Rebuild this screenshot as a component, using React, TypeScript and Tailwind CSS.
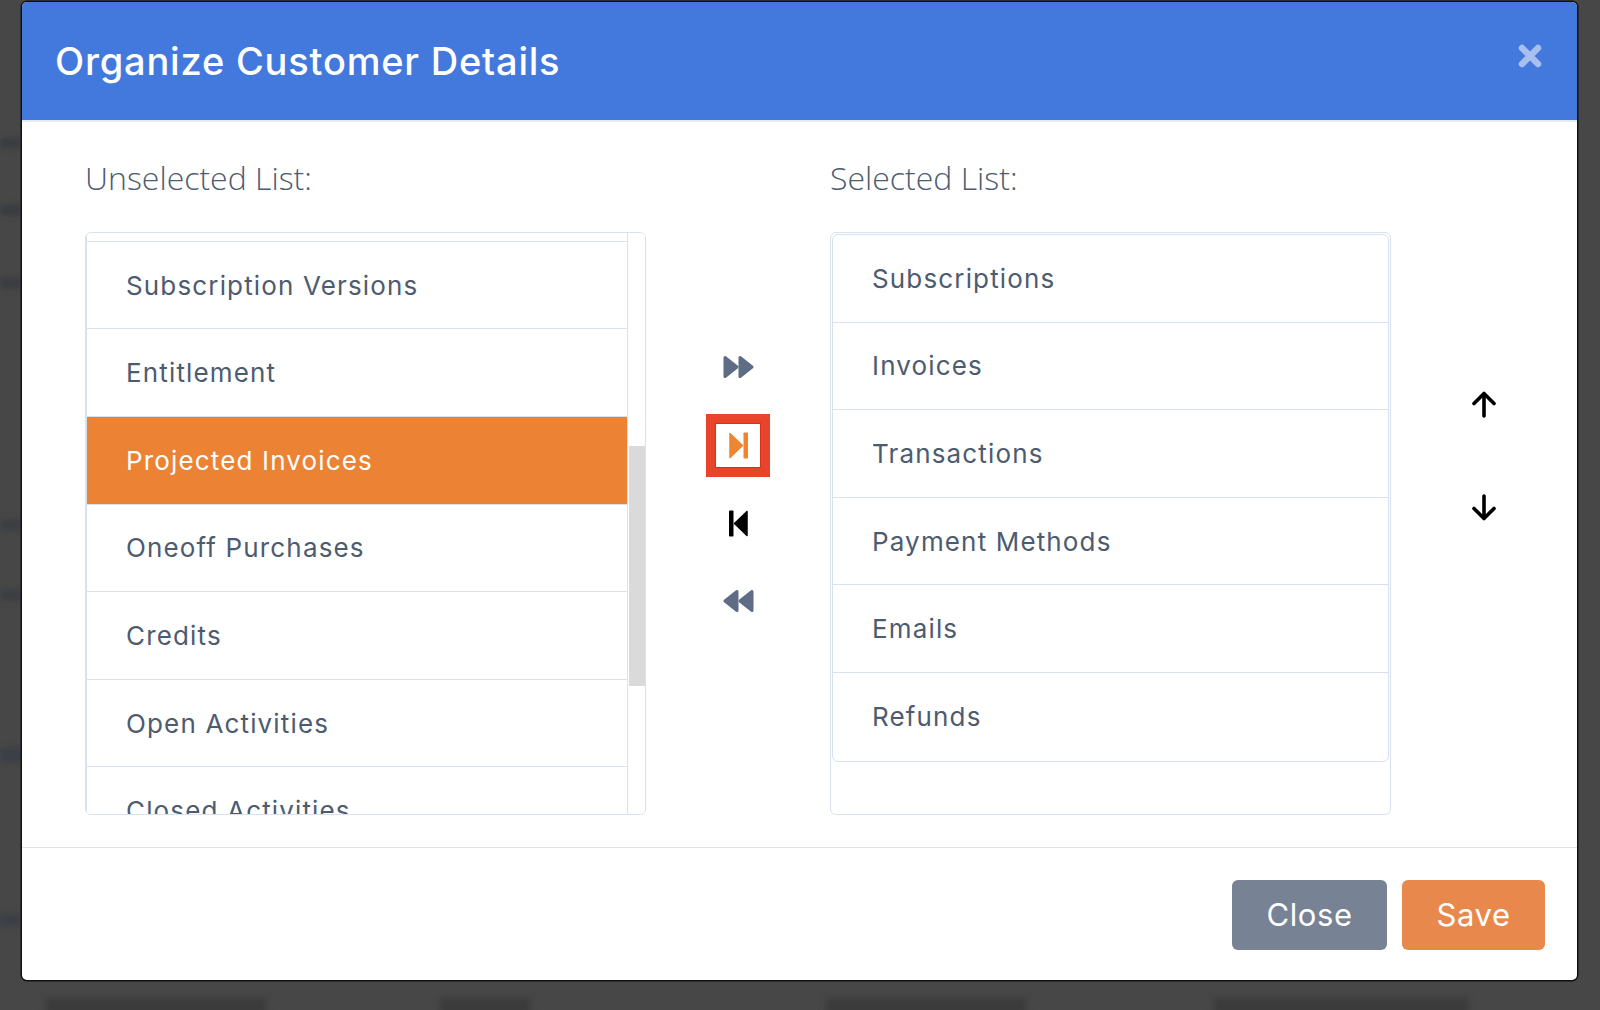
import React from "react";

const leftItems = [
  "Subscription Versions",
  "Entitlement",
  "Projected Invoices",
  "Oneoff Purchases",
  "Credits",
  "Open Activities",
  "Closed Activities",
];
const rightItems = ["Subscriptions", "Invoices", "Transactions", "Payment Methods", "Emails", "Refunds"];

function FastForward({ flip = false }: { flip?: boolean }) {
  return (
    <svg width="31" height="24" viewBox="0 0 31 24" style={flip ? { transform: "scaleX(-1)" } : undefined}>
      <path d="M2 2.5 L14 12 L2 21.5 Z" fill="#5e6d85" stroke="#5e6d85" strokeWidth="3" strokeLinejoin="round" />
      <path d="M17 2.5 L29 12 L17 21.5 Z" fill="#5e6d85" stroke="#5e6d85" strokeWidth="3" strokeLinejoin="round" />
    </svg>
  );
}

function StepForward({ color, flip = false }: { color: string; flip?: boolean }) {
  return (
    <svg width="19" height="27" viewBox="0 0 19 27" style={flip ? { transform: "scaleX(-1)" } : undefined}>
      <path d="M1 1.5 L13.5 13.5 L1 25.5 Z" fill={color} stroke={color} strokeWidth="1.5" strokeLinejoin="round" />
      <rect x="14.5" y="0.5" width="4.5" height="26" rx="0.8" fill={color} />
    </svg>
  );
}

function Arrow({ down = false }: { down?: boolean }) {
  return (
    <svg width="26" height="27" viewBox="0 0 26 27" style={down ? { transform: "scaleY(-1)" } : undefined}>
      <path d="M13 3 L13 25" stroke="#000" strokeWidth="3.6" strokeLinecap="round" />
      <path d="M3 12.5 L13 2.5 L23 12.5" fill="none" stroke="#000" strokeWidth="3.6" strokeLinecap="round" strokeLinejoin="round" />
    </svg>
  );
}

export default function App() {
  return (
    <div className="relative w-[1600px] h-[1010px] overflow-hidden bg-[#474747] pl-[22px] pt-[2px]">
      {/* blurred background page */}
      <div className="absolute left-0 top-[138px] w-[22px] h-[10px] bg-[#393b40] blur-[3px]" />
      <div className="absolute left-0 top-[205px] w-[22px] h-[10px] bg-[#393b40] blur-[3px]" />
      <div className="absolute left-0 top-[278px] w-[22px] h-[10px] bg-[#393b40] blur-[3px]" />
      <div className="absolute left-0 top-[520px] w-[22px] h-[10px] bg-[#3b3d42] blur-[3px]" />
      <div className="absolute left-0 top-[590px] w-[22px] h-[10px] bg-[#3b3d42] blur-[3px]" />
      <div className="absolute left-0 top-[748px] w-[22px] h-[14px] bg-[#3a3e46] blur-[3px]" />
      <div className="absolute left-0 top-[915px] w-[22px] h-[10px] bg-[#3a3e46] blur-[3px]" />
      <div className="absolute left-[46px] top-[998px] w-[220px] h-[16px] bg-[#3b3b3b] blur-[3px]" />
      <div className="absolute left-[440px] top-[998px] w-[90px] h-[16px] bg-[#3b3b3b] blur-[3px]" />
      <div className="absolute left-[826px] top-[998px] w-[200px] h-[16px] bg-[#3b3b3b] blur-[3px]" />
      <div className="absolute left-[1214px] top-[998px] w-[255px] h-[16px] bg-[#3b3b3b] blur-[3px]" />

      {/* modal */}
      <div className="relative z-10 flex w-[1555px] h-[978px] flex-col overflow-hidden rounded-[5px] bg-white shadow-[0_0_0_1.5px_#111]">
        {/* header */}
        <div className="flex h-[118px] shrink-0 items-center justify-between bg-[#4379dc] pl-[33px] pr-[35px]">
          <div className="font-['Inter',sans-serif] text-[38px] font-medium tracking-[0.8px] text-white">
            Organize Customer Details
          </div>
          <svg width="24" height="24" viewBox="0 0 24 24" className="-mt-[10px]">
            <path d="M4 4 L20 20 M20 4 L4 20" stroke="#a7c0ef" strokeWidth="6.5" strokeLinecap="round" />
          </svg>
        </div>
        <div className="h-[2px] shrink-0 bg-[#e3eaf5]" />

        {/* body */}
        <div className="flex h-[725px] shrink-0 pl-[63px] pt-[35px]">
          {/* left column */}
          <div className="flex w-[561px] flex-col">
            <div className="h-[42px] font-['Open_Sans',sans-serif] text-[32px] font-light leading-[42px] text-[#4d5b70]">
              Unselected List:
            </div>
            <div className="mt-[33px] flex h-[583px] overflow-hidden rounded-[6px] border border-[#d8e1ee]">
              <div className="flex w-[542px] flex-col border-x border-[#d8e1ee]">
                <div className="h-[7.8px] shrink-0" />
                {leftItems.map((t) => {
                  const active = t === "Projected Invoices";
                  return (
                    <div
                      key={t}
                      className={`flex h-[87.6px] shrink-0 items-center border-t border-[#d8e1ee] pl-[39px] font-['Inter',sans-serif] text-[26px] tracking-[1.15px] ${
                        active ? "bg-[#ec8233] text-white" : "bg-white text-[#4d5b70]"
                      }`}
                    >
                      {t}
                    </div>
                  );
                })}
              </div>
              <div className="w-[17px] shrink-0 bg-white">
                <div className="mt-[213px] ml-[1px] h-[240px] w-[16px] bg-[#dadada]" />
              </div>
            </div>
          </div>

          {/* middle controls */}
          <div className="flex w-[184px] flex-col items-center pt-[198px]">
            <div className="ml-[1px]">
              <FastForward />
            </div>
            <div className="mt-[35px] flex h-[63px] w-[64px] items-center justify-center border-[9px] border-[#e9432b] bg-white shadow-[inset_0_0_0_1px_#d8301c]">
              <StepForward color="#ee8530" />
            </div>
            <div className="mt-[33px]">
              <StepForward color="#000" flip />
            </div>
            <div className="mt-[52px] ml-[1px]">
              <FastForward flip />
            </div>
          </div>

          {/* right column */}
          <div className="flex w-[561px] flex-col">
            <div className="h-[42px] font-['Open_Sans',sans-serif] text-[32px] font-light leading-[42px] text-[#4d5b70]">
              Selected List:
            </div>
            <div className="mt-[33px] h-[583px] rounded-[6px] border border-[#d8e1ee] p-[1px]">
              <div className="flex flex-col overflow-hidden rounded-[6px] border border-[#d8e1ee]">
                {rightItems.map((t, i) => (
                  <div
                    key={t}
                    className={`flex h-[87.6px] shrink-0 items-center pl-[39px] font-['Inter',sans-serif] text-[26px] tracking-[1.15px] text-[#4d5b70] ${
                      i < rightItems.length - 1 ? "border-b border-[#d8e1ee]" : "h-[86.6px]"
                    }`}
                  >
                    {t}
                  </div>
                ))}
              </div>
            </div>
          </div>

          {/* arrows */}
          <div className="flex flex-1 flex-col items-center pt-[234px]">
            <Arrow />
            <div className="mt-[76px]">
              <Arrow down />
            </div>
          </div>
        </div>

        {/* footer */}
        <div className="flex flex-1 items-start justify-end gap-[15px] border-t border-[#dbe3ef] pr-[32px] pt-[32px]">
          <button className="flex h-[70px] w-[155px] items-center justify-center rounded-[6px] bg-[#778294] font-['Inter',sans-serif] text-[31px] tracking-[0.6px] text-white">
            Close
          </button>
          <button className="flex h-[70px] w-[143px] items-center justify-center rounded-[6px] bg-[#e8884d] font-['Inter',sans-serif] text-[31px] tracking-[0.6px] text-white">
            Save
          </button>
        </div>
      </div>
    </div>
  );
}
